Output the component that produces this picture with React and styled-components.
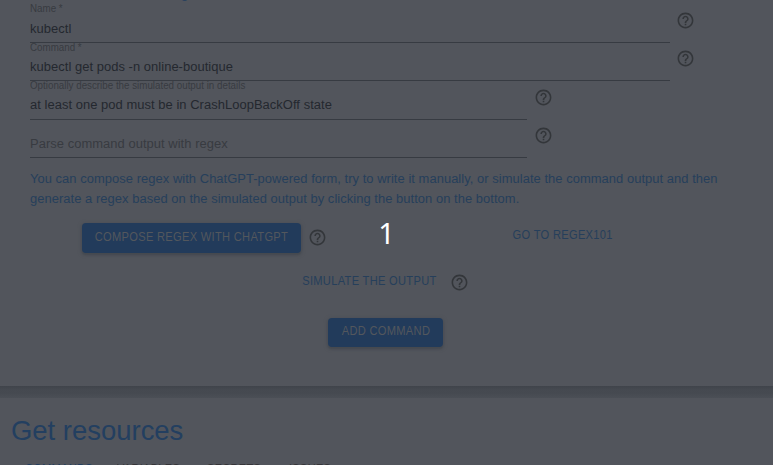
import React from 'react';
import styled, { createGlobalStyle } from 'styled-components';
import { MdHelpOutline } from 'react-icons/md';

const GlobalStyle = createGlobalStyle`
  * { box-sizing: border-box; }
  body { margin: 0; overflow: hidden; background: #52555c; }
`;

const Page = styled.main`
  position: relative;
  width: 773px;
  height: 465px;
  overflow: hidden;
  background: #464a51;
  color: #262a31;
  font-family: "Liberation Sans", Arial, sans-serif;
`;

const FormCard = styled.section`
  height: 386px;
  padding: 0 30px;
  overflow: hidden;
  background: #52555c;
`;

const Previous = styled.div`
  display: flex;
  gap: 52px;
  height: 4px;
  padding-left: 151px;
  overflow: hidden;
  color: #25405e;
  font-size: 13px;
  line-height: 16px;
  span { display: block; margin-top: -14px; }
`;

const Narrow = styled.span`
  display: inline-block;
  transform: scaleX(${({ $scale }) => $scale});
  transform-origin: ${({ $origin }) => $origin || 'left'} center;
`;

const FieldRow = styled.div`
  display: flex;
  height: ${({ $height }) => $height}px;
`;

const Field = styled.div`
  display: flex;
  flex-direction: column;
  width: ${({ $width }) => $width}px;
  border-bottom: 1px solid #373b42;
  white-space: nowrap;
`;

const Label = styled.label`
  height: 10px;
  font-size: 10px;
  line-height: 9px;
  color: #383b41;
`;

const Value = styled.div`
  margin-top: auto;
  margin-bottom: ${({ $bottom }) => $bottom || 4}px;
  font-size: 13.49px;
  line-height: 18px;
  letter-spacing: 0.05px;
  color: ${({ $muted }) => ($muted ? '#383b41' : '#24282f')};
`;

const Help = styled(MdHelpOutline)`
  flex: none;
  width: 19px;
  height: 19px;
  color: #33363a;
`;

const FieldHelp = styled(Help)`
  margin: auto 0 13px ${({ $gap }) => $gap || 6}px;
`;

const Hint = styled.p`
  margin: 11px 0 14px;
  color: #263f5b;
  font-size: 13.49px;
  line-height: 20px;
  letter-spacing: 0.05px;
  white-space: nowrap;
`;

const Actions = styled.div`
  display: flex;
  height: 30px;
  padding-left: 52px;
`;

const Button = styled.button`
  display: flex;
  flex: none;
  justify-content: center;
  width: ${({ $width }) => $width}px;
  height: ${({ $height }) => $height || 30}px;
  padding: 0;
  border: 0;
  border-radius: 4px;
  background: #223b5b;
  box-shadow: 0 2px 2px #454950, 0 1px 4px #464a51;
  color: #53575d;
  font: 12.8px/${({ $line }) => $line || 28}px "Liberation Sans", Arial, sans-serif;
  letter-spacing: 0.35px;
  white-space: nowrap;
`;

const TextButton = styled(Button)`
  height: 24px;
  background: transparent;
  box-shadow: none;
  color: #263f5b;
  line-height: ${({ $line }) => $line || 24}px;
`;

const ComposeHelp = styled(Help)`
  margin: 5px 0 0 7px;
`;

const RegexLink = styled(TextButton)`
  margin-left: 185px;
`;

const Simulate = styled.div`
  display: flex;
  margin: 17px 0 0 272px;
  height: 24px;
`;

const SimulateHelp = styled(Help)`
  margin: 3px 0 0 13px;
`;

const Submit = styled.div`
  display: flex;
  margin: 24px 0 0 298px;
`;

const Divider = styled.div`
  height: 12px;
  background: linear-gradient(#40444b, #454950 30%, #464a51 60%, #4b4f56);
`;

const Resources = styled.section`
  height: 67px;
  padding: 13px 11px 0;
  overflow: hidden;
  background: #52555c;
`;

const Heading = styled.h1`
  margin: 0;
  color: #233f60;
  font-size: 28px;
  font-weight: 400;
  line-height: 40px;
  white-space: nowrap;
`;

const Tabs = styled.nav`
  display: grid;
  grid-template-columns: 92px 90px 82px 60px;
  padding: 10px 0 0 14px;
  font-size: 12.8px;
  line-height: 16px;
  letter-spacing: 0.35px;
  color: #363539;
`;

const Tab = styled.span`
  color: ${({ $active }) => ($active ? '#233f60' : 'inherit')};
`;

const StepOverlay = styled.div`
  position: absolute;
  inset: 0;
  display: flex;
  align-items: center;
  justify-content: center;
  color: #fff;
  font: 29px/40px "Noto Sans", sans-serif;
`;

const fields = [
  { label: 'Name *', value: 'kubectl', width: 640, height: 39 },
  { label: 'Command *', value: 'kubectl get pods -n online-boutique', width: 640, height: 38 },
  { label: 'Optionally describe the simulated output in details', value: 'at least one pod must be in CrashLoopBackOff state', width: 496.5, height: 39, bottom: 5 },
  { value: 'Parse command output with regex', width: 496.5, height: 38, muted: true },
];

const tabs = ['COMMANDS', 'VARIABLES', 'SECRETS', 'ISSUES'];

function Caption({ children }) {
  return <Narrow $scale={0.868} $origin="center">{children}</Narrow>;
}

export default function App() {
  return (
    <Page>
      <GlobalStyle />
      <FormCard>
        <Previous><span>g</span><span>,</span></Previous>
        {fields.map(({ label, value, width, height, bottom, muted }) => (
          <FieldRow key={value} $height={height}>
            <Field $width={width}>
              {label && <Label><Narrow $scale={0.978}>{label}</Narrow></Label>}
              <Value $muted={muted} $bottom={bottom}><Narrow $scale={0.959}>{value}</Narrow></Value>
            </Field>
            <FieldHelp $gap={width === 640 ? 6 : 7.5} />
          </FieldRow>
        ))}
        <Hint>
          <Narrow $scale={0.959}>
            You can compose regex with ChatGPT-powered form, try to write it manually, or simulate the command output and then
            <br />
            generate a regex based on the simulated output by clicking the button on the bottom.
          </Narrow>
        </Hint>
        <Actions>
          <Button $width={219}><Caption>COMPOSE REGEX WITH CHATGPT</Caption></Button>
          <ComposeHelp />
          <RegexLink $width={101}><Caption>GO TO REGEX101</Caption></RegexLink>
        </Actions>
        <Simulate>
          <TextButton $width={135} $line={22}><Caption>SIMULATE THE OUTPUT</Caption></TextButton>
          <SimulateHelp />
        </Simulate>
        <Submit><Button $width={115} $height={29} $line={26}><Caption>ADD COMMAND</Caption></Button></Submit>
      </FormCard>
      <Divider />
      <Resources>
        <Heading><Narrow $scale={0.98}>Get resources</Narrow></Heading>
        <Tabs>
          {tabs.map((name, index) => (
            <Tab key={name} $active={index === 0}><Narrow $scale={0.86}>{name}</Narrow></Tab>
          ))}
        </Tabs>
      </Resources>
      <StepOverlay>1</StepOverlay>
    </Page>
  );
}
